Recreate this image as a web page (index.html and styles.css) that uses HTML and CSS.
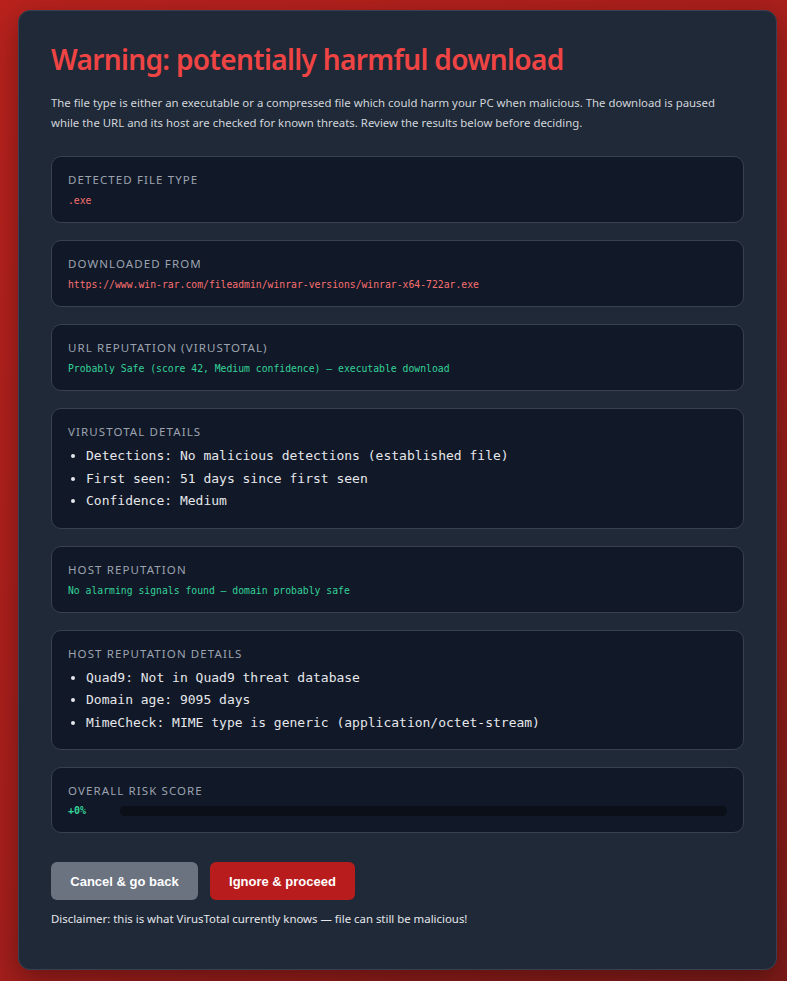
FILE: index.html
```html
<!DOCTYPE html>
<html lang="en">
<head>
<meta charset="utf-8">
<title>Potentially harmful download</title>
<link rel="stylesheet" href="styles.css">
</head>
<body>
<main class="card">
  <h1 class="title">Warning: potentially harmful download</h1>
  <p class="intro">The file type is either an executable or a compressed file which could harm your PC when malicious. The download is paused while the URL and its host are checked for known threats. Review the results below before deciding.</p>

  <section class="panel">
    <div class="label">Detected file type</div>
    <div class="value bad">.exe</div>
  </section>

  <section class="panel">
    <div class="label">Downloaded from</div>
    <div class="value bad">https://www.win-rar.com/fileadmin/winrar-versions/winrar-x64-722ar.exe</div>
  </section>

  <section class="panel">
    <div class="label">URL reputation (VirusTotal)</div>
    <div class="value good">Probably Safe (score 42, Medium confidence) — executable download</div>
  </section>

  <section class="panel">
    <div class="label">VirusTotal details</div>
    <ul class="details">
      <li>Detections: No malicious detections (established file)</li>
      <li>First seen: 51 days since first seen</li>
      <li>Confidence: Medium</li>
    </ul>
  </section>

  <section class="panel">
    <div class="label">Host reputation</div>
    <div class="value good">No alarming signals found — domain probably safe</div>
  </section>

  <section class="panel">
    <div class="label">Host reputation details</div>
    <ul class="details">
      <li>Quad9: Not in Quad9 threat database</li>
      <li>Domain age: 9095 days</li>
      <li>MimeCheck: MIME type is generic (application/octet-stream)</li>
    </ul>
  </section>

  <section class="panel">
    <div class="label">Overall risk score</div>
    <div class="risk">
      <span class="risk-pct">+0%</span>
      <div class="meter"><div class="meter-fill" style="width:0%"></div></div>
    </div>
  </section>

  <div class="actions">
    <button class="btn btn-cancel">Cancel &amp; go back</button>
    <button class="btn btn-proceed">Ignore &amp; proceed</button>
  </div>
  <p class="disclaimer">Disclaimer: this is what VirusTotal currently knows — file can still be malicious!</p>
</main>
</body>
</html>
```

FILE: styles.css
```css
html, body {
  margin: 0;
  padding: 0;
}

body {
  min-height: 981px;
  background: linear-gradient(135deg, #b9221d 0%, #a81f1c 50%, #7f1b18 100%);
  font-family: "Noto Sans", "Open Sans", sans-serif;
  padding: 10px 10px 12px 18px;
  box-sizing: border-box;
}

.card {
  width: 759px;
  box-sizing: border-box;
  background: #1f2937;
  border: 1px solid #374151;
  border-radius: 12px;
  padding: 31px 32px 42px;
  box-shadow: 0 10px 30px rgba(0, 0, 0, 0.35);
}

.title {
  margin: 0 0 17px;
  font-size: 28px;
  font-weight: 600;
  line-height: 34px;
  color: #ef4444;
  letter-spacing: -0.65px;
}

.intro {
  margin: 0 0 23px;
  font-size: 11.4px;
  line-height: 20px;
  color: #d1d5db;
}

.panel {
  background: #111827;
  border: 1px solid #374151;
  border-radius: 10px;
  padding: 15px 16px;
  margin-bottom: 17px;
}

.label {
  font-size: 11.5px;
  line-height: 15px;
  letter-spacing: 1.1px;
  text-transform: uppercase;
  color: #9ca3af;
  margin-bottom: 6px;
}

.value {
  font-family: "DejaVu Sans Mono", monospace;
  font-size: 9.75px;
  line-height: 13px;
  padding-top: 1px;
}

.bad { color: #f87171; }
.good { color: #34d399; }

.details {
  margin: 0;
  padding: 0 0 0 18px;
  font-family: "DejaVu Sans Mono", monospace;
  font-size: 13px;
  line-height: 22.5px;
  color: #e5e7eb;
}

.risk {
  display: flex;
  align-items: center;
  height: 13px;
}

.risk-pct {
  width: 52px;
  font-family: "DejaVu Sans Mono", monospace;
  font-size: 10px;
  line-height: 12px;
  font-weight: bold;
  color: #34d399;
}

.meter {
  flex: 1;
  height: 10px;
  border-radius: 5px;
  background: #0b0f17;
  overflow: hidden;
}

.meter-fill {
  height: 100%;
  background: #34d399;
}

.actions {
  display: flex;
  gap: 12px;
  margin-top: 29px;
}

.btn {
  height: 38px;
  border: none;
  border-radius: 6px;
  padding: 0 18px;
  font-family: "Liberation Sans", Arial, sans-serif;
  font-weight: bold;
  font-size: 13px;
  color: #fff;
}

.btn-cancel {
  width: 147px;
  background: #6b7280;
}

.btn-proceed {
  width: 145px;
  background: #b91c1c;
}

.disclaimer {
  margin: 11px 0 0;
  font-size: 11.4px;
  line-height: 16px;
  color: #e5e7eb;
}
```
